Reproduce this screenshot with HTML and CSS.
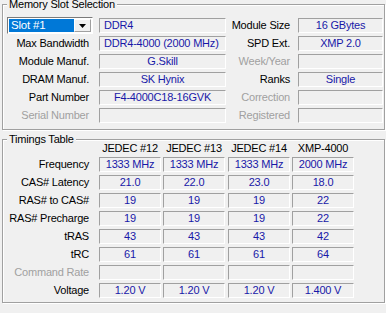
FILE: index.html
```html
<!DOCTYPE html>
<html lang="en">
<head>
    <meta charset="UTF-8">
    <title>Memory SPD</title>
    <link rel="stylesheet" href="styles.css">
</head>
<body>

<!-- Memory slot selection -->
<div class="group slot-group">
    <span class="group-title">Memory Slot Selection</span>
    <div class="slot-grid">
        <div class="combo">
            <span class="combo-value">Slot #1</span>
            <span class="combo-button">
                <svg width="7" height="4" viewBox="0 0 7 4"><polygon points="0,0 7,0 3.5,4" fill="#000"/></svg>
            </span>
        </div>
        <div class="field left">DDR4</div>
        <div class="label right-label">Module Size</div>
        <div class="field">16 GBytes</div>

        <div class="label">Max Bandwidth</div>
        <div class="field left">DDR4-4000 (2000 MHz)</div>
        <div class="label right-label">SPD Ext.</div>
        <div class="field">XMP 2.0</div>

        <div class="label">Module Manuf.</div>
        <div class="field">G.Skill</div>
        <div class="label right-label disabled">Week/Year</div>
        <div class="field"></div>

        <div class="label">DRAM Manuf.</div>
        <div class="field">SK Hynix</div>
        <div class="label right-label">Ranks</div>
        <div class="field">Single</div>

        <div class="label">Part Number</div>
        <div class="field">F4-4000C18-16GVK</div>
        <div class="label right-label disabled">Correction</div>
        <div class="field"></div>

        <div class="label disabled">Serial Number</div>
        <div class="field"></div>
        <div class="label right-label disabled">Registered</div>
        <div class="field"></div>
    </div>
</div>

<!-- Timings table -->
<div class="group timings-group">
    <span class="group-title">Timings Table</span>
    <div class="timings-grid">
        <div></div>
        <div class="head">JEDEC #12</div>
        <div class="head">JEDEC #13</div>
        <div class="head">JEDEC #14</div>
        <div class="head">XMP-4000</div>

        <div class="label">Frequency</div>
        <div class="field cell">1333 MHz</div>
        <div class="field cell">1333 MHz</div>
        <div class="field cell">1333 MHz</div>
        <div class="field cell">2000 MHz</div>

        <div class="label">CAS# Latency</div>
        <div class="field cell">21.0</div>
        <div class="field cell">22.0</div>
        <div class="field cell">23.0</div>
        <div class="field cell">18.0</div>

        <div class="label">RAS# to CAS#</div>
        <div class="field cell">19</div>
        <div class="field cell">19</div>
        <div class="field cell">19</div>
        <div class="field cell">22</div>

        <div class="label">RAS# Precharge</div>
        <div class="field cell">19</div>
        <div class="field cell">19</div>
        <div class="field cell">19</div>
        <div class="field cell">22</div>

        <div class="label">tRAS</div>
        <div class="field cell">43</div>
        <div class="field cell">43</div>
        <div class="field cell">43</div>
        <div class="field cell">42</div>

        <div class="label">tRC</div>
        <div class="field cell">61</div>
        <div class="field cell">61</div>
        <div class="field cell">61</div>
        <div class="field cell">64</div>

        <div class="label disabled">Command Rate</div>
        <div class="field cell"></div>
        <div class="field cell"></div>
        <div class="field cell"></div>
        <div class="field cell"></div>

        <div class="label">Voltage</div>
        <div class="field cell">1.20 V</div>
        <div class="field cell">1.20 V</div>
        <div class="field cell">1.20 V</div>
        <div class="field cell">1.400 V</div>
    </div>
</div>

</body>
</html>
```

FILE: styles.css
```css
* {
    box-sizing: border-box;
}
body {
    margin: 0;
    height: 313px;
    overflow: hidden;
    background: #f0f0f0;
    font-family: "Liberation Sans", Arial, sans-serif;
    font-size: 11px;
    letter-spacing: -0.2px;
    color: #000;
}
.group {
    margin: 0 1px 0 2px;
    border: 1px solid #a0a0a0;
    box-shadow: inset 1px 1px 0 #fff, 1px 1px 0 #fff;
}
.slot-group {
    margin-top: 4px;
}
.timings-group {
    margin-top: 9px;
}
.group-title {
    display: block;
    width: max-content;
    height: 13px;
    line-height: 13px;
    margin: -7px 0 -6px 4px;
    padding: 0 2px;
    background: #f0f0f0;
}
.slot-grid {
    display: grid;
    grid-template-columns: 96px 127px 72px 85px;
    grid-auto-rows: 15px;
    row-gap: 3px;
    padding: 13px 0 6px 0;
}
.timings-grid {
    display: grid;
    grid-template-columns: 96px 64px 65px 64px 64px;
    grid-template-rows: 14px repeat(8, 15px);
    row-gap: 3px;
    padding: 0 0 4px 0;
}
.label {
    text-align: right;
    padding-right: 10px;
    line-height: 15px;
    white-space: nowrap;
}
.right-label {
    padding-right: 8px;
}
.disabled {
    color: #a0a0a0;
}
.field {
    height: 15px;
    border-top: 1px solid #a0a0a0;
    border-left: 1px solid #a0a0a0;
    border-bottom: 1px solid #fff;
    border-right: 1px solid #fff;
    color: #1818a8;
    text-align: center;
    line-height: 13px;
    white-space: nowrap;
    overflow: hidden;
}
.field.left {
    text-align: left;
    padding-left: 4px;
}
.cell {
    width: 62px;
}
.head {
    width: 62px;
    text-align: center;
    line-height: 16px;
    white-space: nowrap;
}
.combo {
    display: flex;
    width: 86px;
    height: 17px;
    margin: -1px 0 -1px 4px;
    padding: 1px;
    background: #fff;
    border: 1px solid;
    border-color: #7a7a7a #fff #fff #7a7a7a;
}
.combo-value {
    flex: 1;
    background: #0078d7;
    color: #fff;
    padding-left: 2px;
    line-height: 13px;
    font-size: 11.5px;
}
.combo-button {
    width: 17px;
    display: flex;
    align-items: center;
    justify-content: center;
    background: #f0f0f0;
    border: 1px solid;
    border-color: #fff #a0a0a0 #a0a0a0 #fff;
}
```
